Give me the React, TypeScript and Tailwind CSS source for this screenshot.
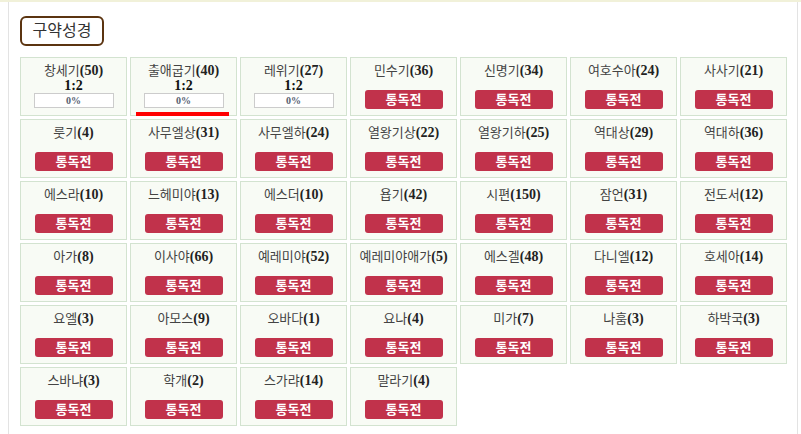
const BOOKS: [string, number][] = [
  ['창세기', 50], ['출애굽기', 40], ['레위기', 27], ['민수기', 36], ['신명기', 34], ['여호수아', 24], ['사사기', 21],
  ['룻기', 4], ['사무엘상', 31], ['사무엘하', 24], ['열왕기상', 22], ['열왕기하', 25], ['역대상', 29], ['역대하', 36],
  ['에스라', 10], ['느헤미야', 13], ['에스더', 10], ['욥기', 42], ['시편', 150], ['잠언', 31], ['전도서', 12],
  ['아가', 8], ['이사야', 66], ['예레미야', 52], ['예레미야애가', 5], ['에스겔', 48], ['다니엘', 12], ['호세아', 14],
  ['요엘', 3], ['아모스', 9], ['오바다', 1], ['요나', 4], ['미가', 7], ['나훔', 3], ['하박국', 3],
  ['스바냐', 3], ['학개', 2], ['스가랴', 14], ['말라기', 4],
];

// books already started show a plan ratio and progress instead of the button
const IN_PROGRESS = new Set(['창세기', '출애굽기', '레위기']);

const FONT = { fontFamily: '"Liberation Serif", "Noto Sans CJK KR", serif' };

export default function App() {
  return (
    <div className="w-[801px] h-[434px] bg-white overflow-hidden text-[#333]" style={FONT}>
      <div className="h-[2px] bg-[#f1f1d9]" />
      <div className="ml-[8px] w-[790px] h-[432px] border-x border-[#e3e3e3] pl-[11px] pt-[14px]">
        {/* Section title */}
        <div className="w-[84px] h-[30px] border-2 border-[#5b3410] rounded-[6px] flex items-center justify-center text-[16px] text-[#333]">
          구약성경
        </div>

        {/* Book grid */}
        <div className="mt-[11px] grid grid-cols-[repeat(7,107px)] auto-rows-[59px] gap-[3px]">
          {BOOKS.map(([name, count]) => {
            const started = IN_PROGRESS.has(name);
            return (
              <div
                key={name}
                className="relative border border-[#d3e3d0] bg-[#f8fbf5] flex flex-col items-center pt-[4px]"
              >
                <div className="h-[16px] leading-[16px] whitespace-nowrap">
                  <span className="text-[13px] text-[#444]">{name}</span>
                  <span className="text-[14px] font-bold text-[#222]">({count})</span>
                </div>
                {started ? (
                  <>
                    <div className="h-[15px] leading-[15px] text-[14px] font-bold text-[#111]">1:2</div>
                    <div className="w-[80px] h-[15px] border border-[#cccccc] bg-white flex items-center justify-center text-[10px] font-bold text-[#556070]">
                      0%
                    </div>
                  </>
                ) : (
                  <button className="mt-[12px] w-[78px] h-[19px] rounded-[3px] bg-[#c1324b] text-white text-[13px] font-bold leading-[19px]">
                    통독전
                  </button>
                )}
                {name === '출애굽기' && (
                  <div className="absolute left-[5px] top-[54px] w-[93px] h-[4px] bg-[#ff0000]" />
                )}
              </div>
            );
          })}
        </div>
      </div>
    </div>
  );
}
